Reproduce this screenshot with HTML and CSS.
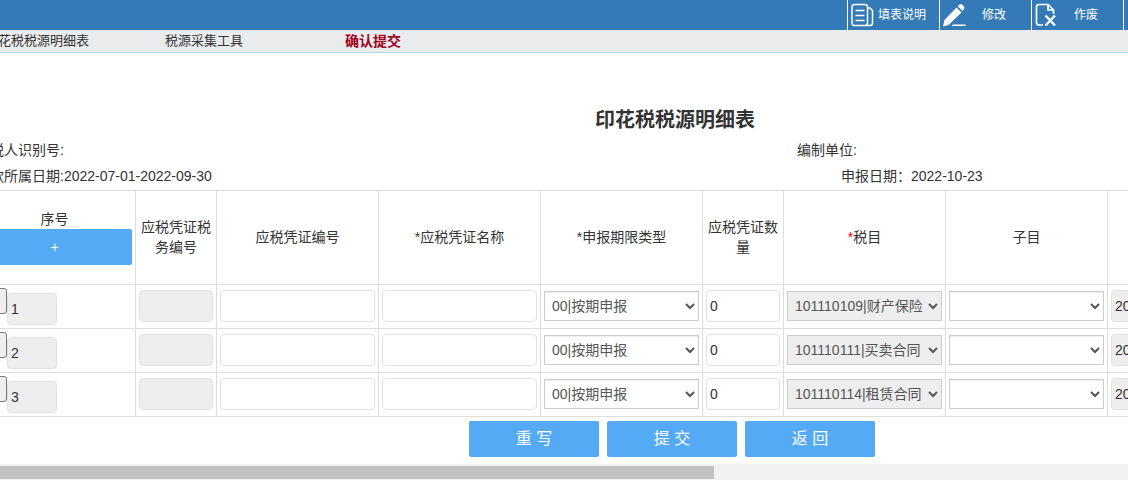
FILE: index.html
```html
<!DOCTYPE html>
<html lang="zh-CN">
<head>
<meta charset="utf-8">
<title>印花税税源明细表</title>
<link rel="stylesheet" href="styles.css">
</head>
<body>
<header class="toolbar">
  <button class="tool" type="button">
    <svg class="tool-icon" viewBox="0 0 24 24" fill="none" stroke="#fff" stroke-width="1.5"><rect x="1" y="1.500" width="15.500" height="21" rx="2.500"/><path d="M16.500 5h2.500l2.500 2.500V20q0 2.500-2.500 2.500h-4"/><path d="M4.500 7.500h9M4.500 12.500h9M4.500 17.500h9"/></svg>
    <span class="tool-label">填表说明</span>
  </button>
  <button class="tool" type="button">
    <svg class="tool-icon" viewBox="0 0 24 24" fill="#fff"><path d="M13.500 4.500l5 5L5.500 22 0 23.500 1.500 17z"/><path d="M14.800 3.200l1.700-1.700q1.300-1 2.500 0l2 2q1 1.300 0 2.500l-1.500 2z"/><path d="M10 21.500h12.500V23H8.500z"/></svg>
    <span class="tool-label">修改</span>
  </button>
  <button class="tool" type="button">
    <svg class="tool-icon" viewBox="0 0 24 24" fill="none" stroke="#fff" stroke-width="1.7"><path d="M8 22H4q-2.500 0-2.500-2.500V4q0-2.500 2.500-2.500h9l5.500 5.500v4M13 1.500V7h5.500"/><path d="M10.500 12.500l9.500 10M20 12.500l-9.500 10" stroke-width="2.400"/></svg>
    <span class="tool-label">作废</span>
  </button>
  <span class="tool-edge"></span>
</header>
<nav class="tabs">
  <a class="tab" href="#detail">印花税税源明细表</a>
  <a class="tab" href="#collect">税源采集工具</a>
  <a class="tab tab-active" href="#submit">确认提交</a>
</nav>
<main class="viewport">
  <form class="sheet">
    <h1 class="title">印花税税源明细表</h1>
    <div class="meta">
      <span>纳税人识别号:</span><span>编制单位:</span>
      <span>税款所属日期:2022-07-01-2022-09-30</span><span class="meta-date">申报日期：2022-10-23</span>
    </div>
    <table class="grid">
      <colgroup><col class="wide"><col class="narrow"><col class="wide"><col class="wide"><col class="wide"><col class="narrow"><col class="wide"><col class="wide"><col class="wide"></colgroup>
      <thead>
        <tr>
          <th>序号<button class="add" type="button">+</button></th>
          <th>应税凭证税务编号</th>
          <th>应税凭证编号</th>
          <th>*应税凭证名称</th>
          <th>*申报期限类型</th>
          <th>应税凭证数量</th>
          <th><span class="required">*</span>税目</th>
          <th>子目</th>
          <th></th>
        </tr>
      </thead>
      <tbody>
        <tr>
          <td><div class="index"><button class="remove" type="button" aria-label="删除"></button><input class="field field-index" aria-label="序号" value="1" readonly></div></td>
          <td><input class="field" aria-label="应税凭证税务编号" readonly></td>
          <td><input class="field" aria-label="应税凭证编号"></td>
          <td><input class="field" aria-label="应税凭证名称"></td>
          <td><select class="choice" aria-label="申报期限类型"><option>00|按期申报</option></select></td>
          <td><input class="field" aria-label="应税凭证数量" value="0"></td>
          <td><select class="choice" aria-label="税目" disabled><option>101110109|财产保险合同</option></select></td>
          <td><select class="choice" aria-label="子目"><option></option></select></td>
          <td><input class="field" aria-label="日期" value="2022-07-01" readonly></td>
        </tr>
        <tr>
          <td><div class="index"><button class="remove" type="button" aria-label="删除"></button><input class="field field-index" aria-label="序号" value="2" readonly></div></td>
          <td><input class="field" aria-label="应税凭证税务编号" readonly></td>
          <td><input class="field" aria-label="应税凭证编号"></td>
          <td><input class="field" aria-label="应税凭证名称"></td>
          <td><select class="choice" aria-label="申报期限类型"><option>00|按期申报</option></select></td>
          <td><input class="field" aria-label="应税凭证数量" value="0"></td>
          <td><select class="choice" aria-label="税目" disabled><option>101110111|买卖合同</option></select></td>
          <td><select class="choice" aria-label="子目"><option></option></select></td>
          <td><input class="field" aria-label="日期" value="2022-07-01" readonly></td>
        </tr>
        <tr>
          <td><div class="index"><button class="remove" type="button" aria-label="删除"></button><input class="field field-index" aria-label="序号" value="3" readonly></div></td>
          <td><input class="field" aria-label="应税凭证税务编号" readonly></td>
          <td><input class="field" aria-label="应税凭证编号"></td>
          <td><input class="field" aria-label="应税凭证名称"></td>
          <td><select class="choice" aria-label="申报期限类型"><option>00|按期申报</option></select></td>
          <td><input class="field" aria-label="应税凭证数量" value="0"></td>
          <td><select class="choice" aria-label="税目" disabled><option>101110114|租赁合同</option></select></td>
          <td><select class="choice" aria-label="子目"><option></option></select></td>
          <td><input class="field" aria-label="日期" value="2022-07-01" readonly></td>
        </tr>
      </tbody>
    </table>
    <div class="actions">
      <button class="action" type="button">重 写</button>
      <button class="action" type="button">提 交</button>
      <button class="action" type="button">返 回</button>
    </div>
  </form>
</main>
<div class="scrollbar"><div class="thumb"></div></div>
</body>
</html>
```
FILE: styles.css
```css
* { box-sizing: border-box; }

body {
  margin: 0;
  height: 100vh;
  overflow: hidden;
  display: flex;
  flex-direction: column;
  background: #fff;
  color: #333;
  font: 14px/20px "Liberation Sans", "Noto Sans CJK SC", sans-serif;
}

button, input, select { font: inherit; margin: 0; }

.toolbar {
  display: flex;
  justify-content: flex-end;
  height: 30px;
  flex: none;
  background: #337ab7;
}

.tool {
  display: flex;
  align-items: center;
  gap: 2px;
  width: 92px;
  padding: 0 12px 0 3px;
  border: 0;
  border-left: 1px solid #fff;
  background: none;
  color: #fff;
  font-size: 12px;
}

.tool-icon { width: 24px; height: 24px; flex: none; }
.tool-label { flex: 1; text-align: center; white-space: nowrap; }
.tool-edge { width: 5px; border-left: 1px solid #fff; }

.tabs {
  display: flex;
  flex: none;
  height: 23px;
  margin-left: -15px;
  background: #e9ebed;
  border-bottom: 1px solid #b8d8f8;
}

.tab {
  width: 180px;
  color: #333;
  font-size: 13px;
  line-height: 22px;
  text-decoration: none;
}

.tab-active { color: #a0001c; font-size: 14px; font-weight: bold; }

.viewport { flex: 1; min-height: 0; overflow: hidden; }

/* Wider than the window: shown scrolled slightly to the right. */
.sheet {
  width: max-content;
  min-width: 1404px;
  margin-left: -27px;
  padding-top: 53px;
}

.title {
  margin: 0 0 3px;
  font-size: 20px;
  line-height: 28px;
  text-align: center;
}

.meta {
  display: grid;
  grid-template-columns: 821px auto;
  padding: 0 3px 1px;
  line-height: 26px;
}

.meta-date { padding-left: 44px; }

.grid {
  width: 1297px;
  table-layout: fixed;
  border-collapse: collapse;
}

.wide { width: 162px; }
.narrow { width: 81px; }

.grid th, .grid td {
  padding: 0 3px 1px;
  border: 1px solid #ddd;
  vertical-align: middle;
}

.grid th { height: 94px; padding-bottom: 2px; font-weight: normal; }
.grid td { height: 44px; }
.required { color: #f00; }

.add {
  display: block;
  width: 100%;
  height: 36px;
  border: 0;
  border-radius: 2px;
  background: #54aaf4;
  color: #fff;
}

.index { display: flex; align-items: flex-start; }

.remove {
  width: 30px;
  height: 26px;
  border: 1px solid #767676;
  border-radius: 3px;
  background: #efefef;
}

.field {
  display: block;
  width: 100%;
  height: 32px;
  padding: 0 3px;
  border: 1px solid #e2e2e2;
  border-radius: 4px;
  background: #fff;
  color: #333;
}

.field:read-only { background: #eee; }
.field-index { width: 50px; margin-top: 5px; }

.choice {
  display: block;
  width: 100%;
  height: 30px;
  padding: 0 2px 0 3px;
  border: 1px solid #ccc;
  border-radius: 0;
  background: #fff;
  box-shadow: inset 0 1px 1px #eee;
  color: #555;
}

.choice:disabled { background: #eee; color: #555; opacity: 1; }

.actions {
  display: flex;
  justify-content: center;
  gap: 8px;
  padding: 4px 6px 0 0;
}

.action {
  width: 130px;
  height: 36px;
  border: 0;
  border-radius: 2px;
  background: #54aaf4;
  color: #fff;
  font-size: 16px;
}

.scrollbar { flex: none; height: 16px; padding: 2px 0 1px; background: #f1f1f1; }
.thumb { width: 63.3%; height: 100%; background: #c1c1c1; }
```
